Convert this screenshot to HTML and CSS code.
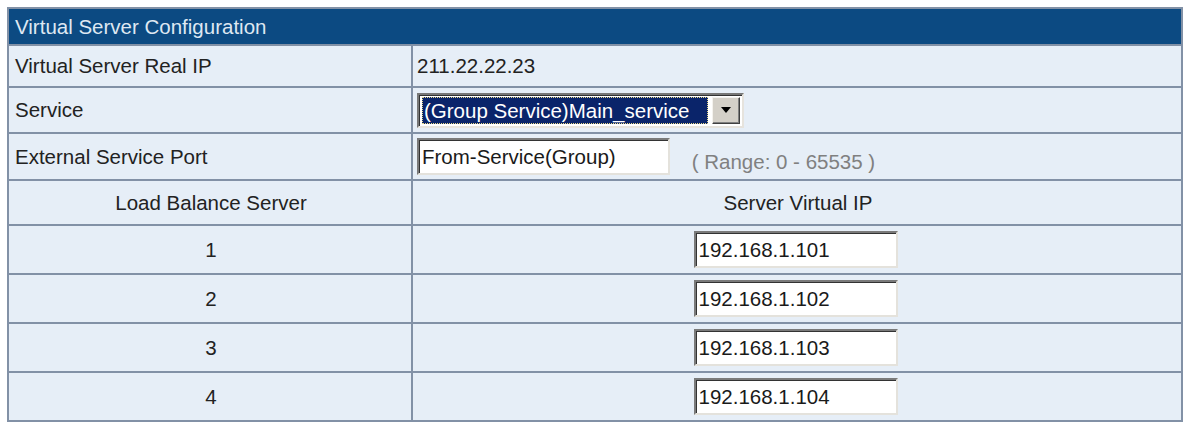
FILE: index.html
```html
<!DOCTYPE html>
<html lang="en">
<head>
    <meta charset="UTF-8">
    <title>Virtual Server Configuration</title>
    <link rel="stylesheet" href="styles.css">
</head>
<body>
    <table class="config">
        <colgroup>
            <col class="col-label">
            <col>
        </colgroup>
        <tr class="row-title">
            <td colspan="2" class="title">Virtual Server Configuration</td>
        </tr>
        <tr class="row-ip">
            <td class="label">Virtual Server Real IP</td>
            <td class="value">211.22.22.23</td>
        </tr>
        <tr class="row-service">
            <td class="label">Service</td>
            <td class="value">
                <div class="combo">
                    <span class="combo-text"><span class="combo-sel">(Group Service)Main_service</span></span>
                    <span class="combo-btn">
                        <svg width="10" height="6" viewBox="0 0 10 6"><path d="M0 0h10L5 6z" fill="#000"/></svg>
                    </span>
                </div>
            </td>
        </tr>
        <tr class="row-port">
            <td class="label">External Service Port</td>
            <td class="value">
                <input type="text" class="field field-port" value="From-Service(Group)">
                <span class="hint">( Range: 0 - 65535 )</span>
            </td>
        </tr>
        <tr class="row-head">
            <td class="center">Load Balance Server</td>
            <td class="center">Server Virtual IP</td>
        </tr>
        <tr class="row-server">
            <td class="center">1</td>
            <td class="center"><input type="text" class="field field-ip" value="192.168.1.101"></td>
        </tr>
        <tr class="row-server">
            <td class="center">2</td>
            <td class="center"><input type="text" class="field field-ip" value="192.168.1.102"></td>
        </tr>
        <tr class="row-server">
            <td class="center">3</td>
            <td class="center"><input type="text" class="field field-ip" value="192.168.1.103"></td>
        </tr>
        <tr class="row-server">
            <td class="center">4</td>
            <td class="center"><input type="text" class="field field-ip" value="192.168.1.104"></td>
        </tr>
    </table>
</body>
</html>
```

FILE: styles.css
```css
body {
    margin: 7px;
    background-color: #fff;
    font-family: "Liberation Sans", Arial, sans-serif;
}

.config {
    width: 1176px;
    border-collapse: collapse;
    table-layout: fixed;
    font-size: 20.5px;
    color: #222;
    background-color: #e6eef7;
}

.col-label {
    width: 404px;
}

.config td {
    border: 2px solid #8291a6;
    padding: 0 4px 0 6px;
    white-space: nowrap;
}

.title {
    background-color: #0c4a82;
    color: #dfe8f2;
    border-color: #0c4a82 #8291a6 #7d94ad #8291a6;
}

.row-title { height: 37px; }
.row-ip { height: 42px; }
.row-service { height: 46px; }
.row-port { height: 47px; }
.row-head { height: 45px; }
.row-server { height: 49px; }

.config td.value {
    padding-left: 4px;
}

.config td.center {
    text-align: center;
}

/* fake windows combo box with highlighted selection */
.combo {
    display: inline-flex;
    align-items: stretch;
    width: 327px;
    height: 35px;
    box-sizing: border-box;
    border: 2px solid;
    border-color: #777 #e6e3dd #e6e3dd #777;
    box-shadow: inset 1px 1px 0 #333;
    background-color: #fff;
    padding: 2px 2px 2px 3px;
    vertical-align: middle;
}

.combo-text {
    flex-grow: 1;
    display: flex;
    background-color: #0a246a;
    outline: 1px dotted #e8d98a;
    outline-offset: -1px;
    margin-right: 4px;
}

.combo-sel {
    color: #fff;
    line-height: 27px;
    padding-left: 2px;
}

.combo-btn {
    width: 26px;
    background-color: #d4d0c8;
    border: 1px solid;
    border-color: #f4f2ee #404040 #404040 #f4f2ee;
    box-shadow: inset -1px -1px 0 #808080;
    display: flex;
    justify-content: center;
    align-items: center;
}

.field {
    font-family: "Liberation Sans", Arial, sans-serif;
    font-size: 20.5px;
    color: #1a1a1a;
    background-color: #fff;
    box-sizing: border-box;
    height: 37px;
    padding: 0 0 0 3px;
    margin: 0;
    border: 2px solid;
    border-color: #7a7a7a #e4e2dc #e4e2dc #7a7a7a;
    box-shadow: inset 1px 1px 0 #333;
    vertical-align: middle;
    outline: none;
}

.field-port {
    width: 253px;
}

.field-ip {
    width: 204px;
    margin-left: -5px;
}

.hint {
    color: #808080;
    margin-left: 16px;
    vertical-align: -7px;
}
```
